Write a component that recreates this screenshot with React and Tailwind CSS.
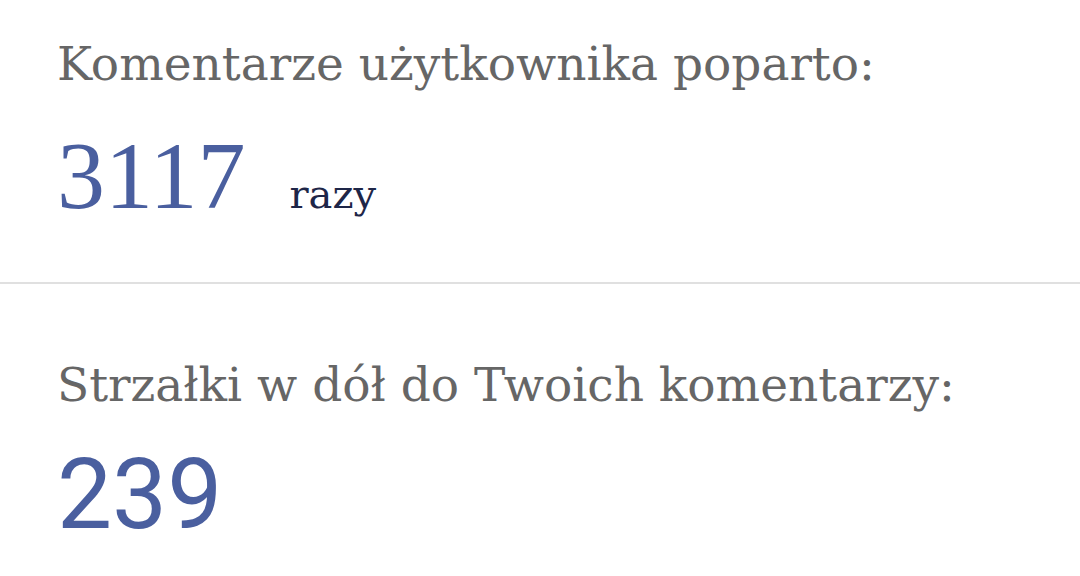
const Stat = ({ label, gap, children }) => {
  return (
    <div className="px-[57px]">
      <p className="text-[47px] leading-[48px] text-[#666666] font-['DejaVu_Serif',serif] whitespace-nowrap">
        {label}
      </p>
      <div className={`flex items-baseline ${gap}`}>{children}</div>
    </div>
  );
};

export default function App() {
  return (
    <div className="w-[1080px] h-[576px] bg-white overflow-hidden">
      <div className="pt-[40px] pb-[58px]">
        <Stat label="Komentarze użytkownika poparto:" gap="mt-[40px]">
          <span className="text-[96px] leading-[96px] text-[#4a5f9f] font-['Liberation_Serif',serif]">
            3117
          </span>
          <span className="ml-[44px] text-[40px] leading-[48px] text-[#1e2648] font-['DejaVu_Serif',serif]">
            razy
          </span>
        </Stat>
      </div>
      <div className="h-[2px] bg-[#e0e0e0]" />
      <div className="pt-[77px]">
        <Stat label="Strzałki w dół do Twoich komentarzy:" gap="mt-[38px]">
          <span className="text-[98px] leading-[96px] text-[#4a5f9f] font-['Roboto',sans-serif]">
            239
          </span>
        </Stat>
      </div>
    </div>
  );
}
